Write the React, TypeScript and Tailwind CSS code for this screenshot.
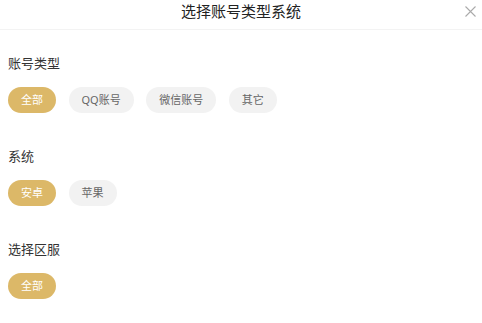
const sections = [
  { title: '账号类型', options: ['全部', 'QQ账号', '微信账号', '其它'] },
  { title: '系统', options: ['安卓', '苹果'] },
  { title: '选择区服', options: ['全部'] },
]

export default function App() {
  return (
    <div
      className="w-[482px] h-[323px] bg-white overflow-hidden"
      style={{ fontFamily: '"Noto Sans", "Noto Sans CJK SC", sans-serif' }}
    >
      {/* Header */}
      <header className="relative h-[30px] border-b border-[#f3f3f3] flex items-center justify-center">
        <h1 className="text-[15px] leading-none text-[#222] -mt-[6px]">选择账号类型系统</h1>
        <button className="absolute right-[6px] top-[6px] w-[11px] h-[11px] text-[#aaa]">
          <svg viewBox="0 0 11 11" className="w-[11px] h-[11px]" fill="none" stroke="currentColor" strokeWidth="1.1">
            <path d="M0.5 0.5 L10.5 10.5 M10.5 0.5 L0.5 10.5" />
          </svg>
        </button>
      </header>

      {/* Sections */}
      <main className="px-2 pt-[24px]">
        {sections.map((s) => (
          <section key={s.title} className="mb-[34px]">
            <h2 className="text-[13px] leading-[18px] text-[#333]">{s.title}</h2>
            <div className="flex gap-[12.5px] mt-[15px]">
              {s.options.map((o, i) => (
                <span
                  key={o}
                  className={`h-[26px] px-[13px] rounded-full flex items-center text-[11px] ${
                    i === 0 ? 'bg-[#dcb868] text-white' : 'bg-[#f2f2f2] text-[#666]'
                  }`}
                >
                  {o}
                </span>
              ))}
            </div>
          </section>
        ))}
      </main>
    </div>
  )
}
